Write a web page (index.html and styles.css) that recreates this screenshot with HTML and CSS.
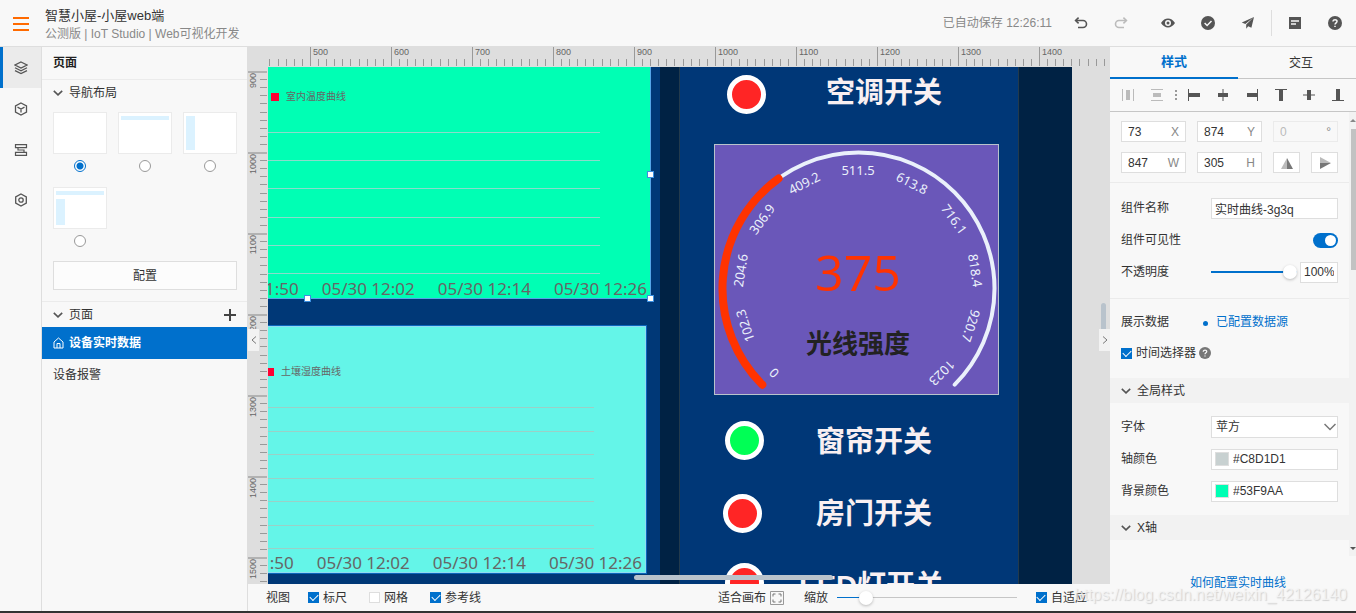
FILE: index.html
```html
<!DOCTYPE html>
<html lang="zh-CN">
<head>
<meta charset="utf-8">
<title>智慧小屋-小屋web端</title>
<link rel="stylesheet" href="styles.css">
</head>
<body>
<header class="topbar">
  <button class="icon-btn menu-btn" aria-label="菜单"><svg width="16" height="14" viewBox="0 0 16 14"><path d="M0 1h16M0 7h16M0 13h16" stroke="#ff6a00" stroke-width="2"/></svg></button>
  <div class="project">
    <h1 class="project-name">智慧小屋-小屋web端</h1>
    <p class="project-meta">公测版 | IoT Studio | Web可视化开发</p>
  </div>
  <span class="saved">已自动保存 12:26:11</span>
  <nav class="actions">
    <button class="icon-btn" aria-label="撤销"><svg width="14" height="14" viewBox="0 0 14 14" fill="none" stroke="#555" stroke-width="1.6"><path d="M2 4.5h7a3.5 3.5 0 0 1 0 7H4"/><path d="M4.6 1.6 1.6 4.5l3 2.9"/></svg></button>
    <button class="icon-btn" aria-label="重做"><svg width="14" height="14" viewBox="0 0 14 14" fill="none" stroke="#bbb" stroke-width="1.6"><path d="M12 4.5H5a3.5 3.5 0 0 0 0 7h5"/><path d="m9.400 1.6 3 2.900-3 2.900"/></svg></button>
    <button class="icon-btn gap-left" aria-label="预览"><svg width="14" height="14" viewBox="0 0 14 14"><path fill="#555" fill-rule="evenodd" d="M0 7c2-3 4.300-4.400 7-4.400S12 4 14 7c-2 3-4.300 4.400-7 4.400S2 10 0 7zm7-3a3 3 0 1 0 0 6 3 3 0 0 0 0-6z"/><circle cx="7" cy="7" r="1.500" fill="#555"/></svg></button>
    <button class="icon-btn" aria-label="检查"><svg width="14" height="14" viewBox="0 0 14 14"><circle cx="7" cy="7" r="7" fill="#555"/><path d="m3.600 7 2.500 2.500 4.400-4.600" fill="none" stroke="#f8f8f8" stroke-width="1.500"/></svg></button>
    <button class="icon-btn" aria-label="发布"><svg width="14" height="14" viewBox="0 0 14 14"><path fill="#555" d="M13 1 .8 6.500l3.500 1.600zM13 1 5.200 8.600v4.200l2-2.600 3.200 1.600z"/></svg></button>
    <span class="divider"></span>
    <button class="icon-btn" aria-label="文档"><svg width="14" height="14" viewBox="0 0 14 14"><path fill="#555" d="M1 1h12v12H1z"/><path d="M3 5h8M3 8h5" stroke="#f8f8f8" stroke-width="1.300"/></svg></button>
    <button class="icon-btn" aria-label="帮助"><svg width="14" height="14" viewBox="0 0 14 14"><circle cx="7" cy="7" r="7" fill="#555"/><path d="M5 5.600C5 3 9.200 3.200 9 5.500 8.900 6.800 7 6.900 7 8.600M7 9.800v1.300" fill="none" stroke="#f8f8f8" stroke-width="1.500"/></svg></button>
  </nav>
</header>

<div class="workspace">
  <nav class="rail">
    <button class="rail-btn active" aria-label="页面"><svg width="14" height="14" viewBox="0 0 14 14" fill="none" stroke="#555" stroke-width="1.200"><path d="M7 1 13 4 7 7 1 4z"/><path d="M1 6.800l6 3 6-3M1 9.600l6 3 6-3"/></svg></button>
    <button class="rail-btn" aria-label="组件"><svg width="14" height="14" viewBox="0 0 14 14" fill="none" stroke="#555" stroke-width="1.300"><path d="m7 1 5.500 2.800v6.400L7 13l-5.500-2.800V3.800zM3.500 5.200 7 7l3.500-1.800M7 7v3.600"/></svg></button>
    <button class="rail-btn" aria-label="数据"><svg width="14" height="14" viewBox="0 0 14 14" fill="none" stroke="#555" stroke-width="1.200"><path d="M1.500 1.600h11v3h-11zM1.500 9.400h11v3h-11zM4 4.600v2.400h6v2.400"/></svg></button>
    <button class="rail-btn settings" aria-label="设置"><svg width="14" height="14" viewBox="0 0 14 14" fill="none" stroke="#555" stroke-width="1.300"><path d="m7 1 5.300 3v6L7 13l-5.300-3V4z"/><circle cx="7" cy="7" r="2.200"/></svg></button>
  </nav>

  <aside class="pages">
    <h2 class="pages-title">页面</h2>
    <section class="nav-layout">
      <h3 class="fold"><svg class="chev" width="10" height="6" viewBox="0 0 10 6"><path d="m.8.8 4.200 4 4.200-4"/></svg>导航布局</h3>
      <div class="layouts">
        <label class="layout"><span class="thumb"></span><input type="radio" name="layout" checked aria-label="无导航"></label>
        <label class="layout"><span class="thumb"><i class="bar-top"></i></span><input type="radio" name="layout" aria-label="顶部导航"></label>
        <label class="layout"><span class="thumb"><i class="bar-side"></i></span><input type="radio" name="layout" aria-label="侧边导航"></label>
        <label class="layout"><span class="thumb"><i class="bar-top"></i><i class="bar-side"></i></span><input type="radio" name="layout" aria-label="混合导航"></label>
      </div>
      <button class="config">配置</button>
    </section>
    <section class="page-list">
      <h3 class="fold"><svg class="chev" width="10" height="6" viewBox="0 0 10 6"><path d="m.8.8 4.200 4 4.200-4"/></svg>页面
        <button class="icon-btn add" aria-label="新增页面"><svg width="12" height="12" viewBox="0 0 12 12"><path d="M0 6h12M6 0v12" stroke="#444" stroke-width="2"/></svg></button></h3>
      <a class="page-item current" href="#p1"><svg width="11" height="12" viewBox="0 0 11 12" fill="none" stroke="#fff"><path d="M1 5 5.500 1 10 5v6H1zM4 11V6.500h3V11"/></svg>设备实时数据</a>
      <a class="page-item" href="#p2">设备报警</a>
    </section>
  </aside>

  <main class="editor">
    <svg class="ruler-x" role="img" aria-label="水平标尺">
      <defs>
        <pattern id="tx" x="42" width="81" height="20" patternUnits="userSpaceOnUse">
          <path fill="#999" d="M0 0h1v19H0zM8 12h1v7H8zM16 12h1v7h-1zM24 12h1v7h-1zM32 12h1v7h-1zM40 12h1v7h-1zM49 12h1v7h-1zM57 12h1v7h-1zM65 12h1v7h-1zM73 12h1v7h-1z"/>
        </pattern>
      </defs>
      <rect width="100%" height="20" fill="url(#tx)"/>
      <text x="45" y="8">500</text><text x="126" y="8">600</text><text x="207" y="8">700</text><text x="288" y="8">800</text><text x="369" y="8">900</text><text x="450" y="8">1000</text><text x="531" y="8">1100</text><text x="612" y="8">1200</text><text x="693" y="8">1300</text><text x="774" y="8">1400</text>
    </svg>
    <svg class="ruler-y" role="img" aria-label="垂直标尺">
      <defs>
        <pattern id="ty" y="4" width="20" height="81" patternUnits="userSpaceOnUse">
          <path fill="#b2b2b2" d="M0 0h19v2H0z"/>
          <path fill="#999" d="M12 8h7v1h-7zM12 16h7v1h-7zM12 24h7v1h-7zM12 32h7v1h-7zM12 41h7v1h-7zM12 49h7v1h-7zM12 57h7v1h-7zM12 65h7v1h-7zM12 73h7v1h-7z"/>
        </pattern>
      </defs>
      <rect width="20" height="100%" fill="url(#ty)"/>
      <g text-anchor="end">
        <text transform="translate(8 6) rotate(-90)">900</text><text transform="translate(8 87) rotate(-90)">1000</text><text transform="translate(8 168) rotate(-90)">1100</text><text transform="translate(8 249) rotate(-90)">1200</text><text transform="translate(8 330) rotate(-90)">1300</text><text transform="translate(8 411) rotate(-90)">1400</text><text transform="translate(8 492) rotate(-90)">1500</text>
      </g>
    </svg>

    <div class="stage">
      <div class="artboard">
        <div class="column"></div>
        <figure class="chart temp">
          <figcaption class="legend">室内温度曲线</figcaption>
          <div class="grid"><i></i><i></i><i></i><i></i><i></i><i></i></div>
          <div class="axis"><span>05/30 11:50</span><span>05/30 12:02</span><span>05/30 12:14</span><span>05/30 12:26</span></div>
        </figure>
        <i class="knob k-right"></i><i class="knob k-bottom"></i><i class="knob k-corner"></i>
        <figure class="chart soil">
          <figcaption class="legend">土壤湿度曲线</figcaption>
          <div class="grid"><i></i><i></i><i></i><i></i><i></i><i></i><i></i></div>
          <div class="axis"><span>05/30 11:50</span><span>05/30 12:02</span><span>05/30 12:14</span><span>05/30 12:26</span></div>
        </figure>
        <span class="lamp red lamp-1"></span><span class="switch-name name-1">空调开关</span>
        <svg class="gauge" viewBox="0 0 285 251">
          <g fill="none" stroke-linecap="round">
            <path d="M48.300 240.700A136 136 0 1 1 240.700 240.700" stroke="#eaf1fb" stroke-width="4"/>
            <path d="M48.300 240.700A136 136 0 0 1 64.600 34.500" stroke="#ff3300" stroke-width="8"/>
          </g>
          <g class="gauge-ticks" transform="translate(144 145)">
            <text transform="rotate(-135)" y="-114">0</text><text transform="rotate(-108)" y="-114">102.3</text><text transform="rotate(-81)" y="-114">204.6</text><text transform="rotate(-54)" y="-114">306.9</text><text transform="rotate(-27)" y="-114">409.2</text><text y="-114">511.5</text><text transform="rotate(27)" y="-114">613.8</text><text transform="rotate(54)" y="-114">716.1</text><text transform="rotate(81)" y="-114">818.4</text><text transform="rotate(108)" y="-114">920.7</text><text transform="rotate(135)" y="-114">1023</text>
          </g>
          <text class="gauge-value" x="144" y="147">375</text>
          <text class="gauge-name" x="144" y="209">光线强度</text>
        </svg>
        <span class="lamp green lamp-2"></span><span class="switch-name name-2">窗帘开关</span>
        <span class="lamp red lamp-3"></span><span class="switch-name name-3">房门开关</span>
        <span class="lamp red lamp-4"></span><span class="switch-name name-4">LED灯开关</span>
      </div>
      <i class="scroll-x"></i><i class="scroll-y"></i>
    </div>
    <button class="collapse left" aria-label="收起左栏"><svg width="6" height="8" viewBox="0 0 6 8"><path d="M5 .5 1 4l4 3.500"/></svg></button>
    <button class="collapse right" aria-label="收起右栏"><svg width="6" height="8" viewBox="0 0 6 8"><path d="m1 .5 4 3.500-4 3.500"/></svg></button>

    <div class="statusbar">
      <span class="view-label">视图</span>
      <label class="check"><input type="checkbox" checked>标尺</label>
      <label class="check"><input type="checkbox">网格</label>
      <label class="check"><input type="checkbox" checked>参考线</label>
      <button class="fit">适合画布<svg width="14" height="14" viewBox="0 0 14 14" fill="none" stroke="#999"><path d="M.5.5h13v13H.5z"/><path d="M3 5.500V3h2.500M8.500 3H11v2.500M11 8.500V11H8.500M5.500 11H3V8.500" stroke="#777"/></svg></button>
      <div class="zoom"><label for="zoom">缩放</label><input id="zoom" class="range zoom-range" type="range" value="13"></div>
      <label class="check fit-auto"><input type="checkbox" checked>自适应</label>
    </div>
  </main>

  <aside class="props">
    <div class="tabs"><button class="tab on">样式</button><button class="tab">交互</button></div>
    <div class="aligns">
      <button class="icon-btn" aria-label="水平分布"><svg width="14" height="14" viewBox="0 0 14 14" fill="#bbb"><path d="M1 1h1v12H1zM12 1h1v12h-1zM5 2h4v10H5z"/></svg></button>
      <button class="icon-btn" aria-label="垂直分布"><svg width="14" height="14" viewBox="0 0 14 14" fill="#bbb"><path d="M1 1h12v1H1zM1 12h12v1H1zM3 5h8v4H3z"/></svg></button>
      <svg class="dots" width="2" height="10" viewBox="0 0 2 10" fill="#999"><path d="M0 0h2v2H0zM0 4h2v2H0zM0 8h2v2H0z"/></svg>
      <button class="icon-btn" aria-label="左对齐"><svg width="14" height="14" viewBox="0 0 14 14" fill="#555"><path d="M1 1h1v12H1zM2 5h11v4H2z"/></svg></button>
      <button class="icon-btn" aria-label="水平居中"><svg width="14" height="14" viewBox="0 0 14 14" fill="#555"><path d="M6.500 1h1v12h-1zM2 5h10v4H2z"/></svg></button>
      <button class="icon-btn" aria-label="右对齐"><svg width="14" height="14" viewBox="0 0 14 14" fill="#555"><path d="M12 1h1v12h-1zM2 5h10v4H2z"/></svg></button>
      <button class="icon-btn" aria-label="顶对齐"><svg width="14" height="14" viewBox="0 0 14 14" fill="#555"><path d="M1 1h12v1H1zM5 2h4v11H5z"/></svg></button>
      <button class="icon-btn" aria-label="垂直居中"><svg width="14" height="14" viewBox="0 0 14 14" fill="#555"><path d="M1 6.500h12v1H1zM5 2h4v10H5z"/></svg></button>
      <button class="icon-btn" aria-label="底对齐"><svg width="14" height="14" viewBox="0 0 14 14" fill="#555"><path d="M1 12h12v1H1zM5 1h4v11H5z"/></svg></button>
    </div>

    <div class="props-scroll">
      <div class="props-body">
        <section class="geometry">
          <label class="field"><input type="text" value="73"><span>X</span></label>
          <label class="field"><input type="text" value="874"><span>Y</span></label>
          <label class="field off"><input type="text" value="0" disabled><span>°</span></label>
          <label class="field"><input type="text" value="847"><span>W</span></label>
          <label class="field"><input type="text" value="305"><span>H</span></label>
          <div class="flips">
            <button class="flip" aria-label="水平翻转"><svg width="12" height="12" viewBox="0 0 12 12"><path d="M6 1v11H0z" fill="#bbb"/><path d="M6 1v11h6z" fill="#777"/></svg></button>
            <button class="flip" aria-label="垂直翻转"><svg width="12" height="12" viewBox="0 0 12 12"><path d="M1 6h11L1 0z" fill="#bbb"/><path d="M1 6h11L1 12z" fill="#777"/></svg></button>
          </div>
        </section>
        <section class="basic">
          <label class="row"><span class="row-label">组件名称</span><input class="text-box" type="text" value="实时曲线-3g3q"></label>
          <label class="row"><span class="row-label">组件可见性</span><input class="toggle" type="checkbox" checked></label>
          <div class="row"><label class="row-label" for="opacity">不透明度</label><div class="opacity"><input id="opacity" class="range opacity-range" type="range" value="100"><input class="text-box percent" type="text" value="100%" aria-label="不透明度数值"></div></div>
        </section>
        <section class="data">
          <div class="row"><span class="row-label">展示数据</span><a class="source" href="#data">已配置数据源</a></div>
          <div class="row picker"><label class="check"><input type="checkbox" checked>时间选择器</label><svg width="12" height="12" viewBox="0 0 14 14"><circle cx="7" cy="7" r="7" fill="#777"/><path d="M5 5.600C5 3 9.200 3.200 9 5.500 8.900 6.800 7 6.900 7 8.600M7 9.800v1.300" fill="none" stroke="#f8f8f8" stroke-width="1.500"/></svg></div>
        </section>
        <h3 class="group"><svg class="chev" width="10" height="6" viewBox="0 0 10 6"><path d="m.8.8 4.200 4 4.200-4"/></svg>全局样式</h3>
        <section class="global">
          <label class="row"><span class="row-label">字体</span><span class="select-wrap"><select class="text-box"><option>苹方</option></select><svg width="12" height="8" viewBox="0 0 12 8"><path d="m.5 1 5.500 5.500L11.500 1"/></svg></span></label>
          <label class="row"><span class="row-label">轴颜色</span><span class="text-box color"><i class="swatch axis-color"></i><input type="text" value="#C8D1D1"></span></label>
          <label class="row"><span class="row-label">背景颜色</span><span class="text-box color"><i class="swatch bg-color"></i><input type="text" value="#53F9AA"></span></label>
        </section>
        <h3 class="group"><svg class="chev" width="10" height="6" viewBox="0 0 10 6"><path d="m.8.8 4.200 4 4.200-4"/></svg>X轴</h3>
      </div>
      <div class="lane"><i class="arrow up"></i><i class="lane-thumb"></i><i class="arrow down"></i></div>
    </div>
    <div class="help"><a href="#help">如何配置实时曲线</a></div>
  </aside>
</div>
<div class="watermark">https://blog.csdn.net/weixin_42126140</div>
</body>
</html>
```

FILE: styles.css
```css
* { box-sizing: border-box; }

body {
  margin: 0;
  height: 100vh;
  display: flex;
  flex-direction: column;
  overflow: hidden;
  border-bottom: 2px solid #333;
  background: #f8f8f8;
  color: #333;
  font: 12px/16px "Liberation Sans", "Noto Sans CJK SC", sans-serif;
}

h1, h2, h3, p, figure { margin: 0; font-size: 12px; font-weight: 400; }
button, input, select { font: inherit; color: inherit; margin: 0; }
button { padding: 0; border: 0; background: none; }
a { color: #0070cc; text-decoration: none; }
svg { display: block; flex: none; }

.icon-btn { display: grid; place-items: center; width: 14px; height: 14px; }
.chev { fill: none; stroke: #555; stroke-width: 1.6; }

/* top bar */
.topbar {
  flex: none;
  display: flex;
  align-items: center;
  height: 47px;
  padding: 0 14px 0 13px;
  border-bottom: 1px solid #dedede;
}
.menu-btn { width: 16px; margin-top: 2px; }
.project { margin-left: 16px; padding-top: 4px; }
.project-name { font-size: 13px; line-height: 18px; }
.project-meta { line-height: 18px; color: #888; }
.saved { margin-left: auto; color: #888; }
.actions { display: flex; align-items: center; gap: 26px; margin-left: 22px; }
.gap-left { margin-left: 7px; }
.divider { width: 1px; height: 26px; margin: 0 -10px; background: #dedede; }

.workspace { flex: 1; min-height: 0; display: flex; }

/* icon rail */
.rail { flex: none; width: 42px; border-right: 1px solid #dedede; }
.rail-btn { display: grid; place-items: center; width: 41px; height: 41px; }
.rail-btn.active { border-left: 3px solid #0070cc; background: #ebebeb; padding-right: 3px; }
.rail-btn.settings { margin-top: 9px; }

/* pages panel */
.pages { flex: none; width: 206px; border-right: 1px solid #dedede; }
.pages-title { height: 33px; padding-left: 11px; line-height: 32px; font-weight: 700; color: #222; border-bottom: 1px solid #ebebeb; }
.nav-layout { padding: 0 10px 11px 11px; border-bottom: 1px solid #ebebeb; }
.fold { display: flex; align-items: center; gap: 6px; height: 25px; }
.nav-layout .fold { height: 26px; }
.layouts { display: grid; grid-template-columns: repeat(3, 54px); justify-content: space-between; row-gap: 15px; padding-top: 6px; }
.layout { display: flex; flex-direction: column; align-items: center; gap: 6px; }
.thumb { display: grid; grid-template: 4px 1fr / 9px 1fr; gap: 4px; width: 54px; height: 42px; padding: 3px 2px; border: 1px solid #ebebeb; background: #fff; }
.bar-top { grid-column: 1 / 3; background: #dbf2ff; }
.bar-side { grid-row: 1 / 3; background: #dbf2ff; }
.bar-top + .bar-side { grid-row: 2; }
.layouts input { appearance: none; width: 12px; height: 12px; border: 1px solid #999; border-radius: 50%; background: #fff; }
.layouts input:checked { border-color: #0070cc; background: radial-gradient(#0070cc 3px, #fff 4px); }
.config { display: block; width: 100%; height: 29px; margin-top: 14px; border: 1px solid #dedede; background: #fcfcfc; }
.page-list .fold { padding: 0 10px 0 11px; }
.add { margin-left: auto; }
.page-item { display: flex; align-items: center; gap: 5px; height: 32px; padding-left: 11px; color: #333; }
.page-item.current { background: #0070cc; color: #fff; font-weight: 700; }

/* canvas */
.editor { position: relative; flex: 1; min-width: 0; display: grid; grid-template: 20px 1fr 27px / 20px 1fr; background: #dedede; }
.ruler-x { grid-area: 1 / 2; width: 100%; height: 20px; }
.ruler-y { grid-area: 2 / 1; width: 20px; height: 100%; }
.ruler-x text, .ruler-y text { font-size: 9px; fill: #666; }
.stage { position: relative; grid-area: 2 / 2; overflow: hidden; }
.artboard { position: absolute; inset: 0 auto 0 0; width: 804px; overflow: hidden; background: linear-gradient(90deg, #003877 392px, #002244 392px); }
.column { position: absolute; inset: 0 auto 0 411px; width: 340px; background: #003777; border: solid #223a4c; border-width: 0 1px; }

.chart { position: absolute; left: -300px; border: 1px solid #8fdcf2; }
.temp { top: -20px; width: 683px; height: 252px; background: #00ffb4; border-color: #54a5e8; }
.soil { top: 259px; width: 678px; height: 247px; background: #64f5e8; outline: 1px solid #0a66bb; }
.legend { position: absolute; display: flex; align-items: center; gap: 7px; font-size: 10px; line-height: 12px; color: #666; }
.legend::before { content: ""; width: 8px; height: 8px; background: #ff0033; }
.temp .legend { left: 302px; top: 43px; }
.soil .legend { left: 297px; top: 39px; }
.grid { position: absolute; left: 0; display: flex; flex-direction: column; justify-content: space-between; }
.grid i { height: 1px; background: #8bdccb; }
.temp .grid { top: 84px; width: 631px; height: 142px; }
.soil .grid { top: 80px; width: 625px; height: 142px; }
.soil .grid i { background: #9bd0c6; }
.axis { position: absolute; right: 0; bottom: -3px; display: flex; gap: 23px; padding-right: 3px; font: 17px/24px "Noto Sans", sans-serif; color: #666; white-space: nowrap; }
.knob { position: absolute; width: 7px; height: 7px; border: 1px solid #3c8fe0; background: #fff; }
.k-right { left: 379px; top: 104px; }
.k-bottom { left: 36px; top: 228px; }
.k-corner { left: 379px; top: 228px; }

.lamp { position: absolute; width: 39px; height: 39px; border: 5px solid #fff; border-radius: 50%; }
.red { background: #ff2525; }
.green { background: #00ff55; }
.lamp-1 { left: 459px; top: 8px; }
.lamp-2 { left: 457px; top: 354px; }
.lamp-3 { left: 455px; top: 427px; }
.lamp-4 { left: 457px; top: 496px; }
.switch-name { position: absolute; font-size: 29px; line-height: 36px; font-weight: 700; color: #f9f0f2; white-space: nowrap; }
.name-1 { left: 558px; top: 8px; }
.name-2 { left: 548px; top: 357px; }
.name-3 { left: 548px; top: 429px; }
.name-4 { left: 531px; top: 501px; }

.gauge { position: absolute; left: 446px; top: 77px; width: 285px; height: 251px; background: #6a57b9; outline: 1px solid #b9c3cc; outline-offset: -1px; }
.gauge text { text-anchor: middle; }
.gauge-ticks { font: 13px "Noto Sans", sans-serif; fill: #eaf1fb; }
.gauge-value { font: 50px "Open Sans", "Noto Sans", sans-serif; fill: #ff3300; }
.gauge-name { font-size: 26px; font-weight: 700; fill: #222; }

.scroll-x { position: absolute; left: 366px; bottom: 4px; width: 199px; height: 5px; border-radius: 3px; background: #b9c3cc; }
.scroll-y { position: absolute; right: 4px; top: 236px; width: 5px; height: 40px; border-radius: 3px; background: #b9c3cc; }
.collapse { position: absolute; top: 282px; display: grid; place-items: center; width: 11px; height: 22px; background: #f2f2f2; }
.collapse svg { fill: none; stroke: #777; }
.collapse.left { left: 0; }
.collapse.right { right: 0; }

/* status bar */
.statusbar { grid-area: 3 / 1 / 4 / 3; display: flex; align-items: center; padding: 0 23px 0 18px; background: #f8f8f8; white-space: nowrap; }
.check { display: flex; align-items: center; gap: 4px; }
.check input { appearance: none; display: grid; place-items: center; width: 11px; height: 11px; border: 1px solid #dedede; background: #fff; }
.check input:checked { border-color: #0070cc; background: #0070cc; }
.check input:checked::after { content: ""; width: 7px; height: 4px; margin-top: -2px; border: solid #fff; border-width: 0 0 1px 1px; rotate: -45deg; }
.view-label { margin-right: 18px; }
.statusbar .check { margin-right: 22px; }
.statusbar .fit-auto { margin-right: 0; }
.fit { display: flex; align-items: center; gap: 4px; margin-left: auto; }
.zoom { display: flex; align-items: center; gap: 9px; margin: 0 19px 0 20px; }
.range { appearance: none; height: 14px; background: none; }
.range::-webkit-slider-runnable-track { height: 14px; }
.range::-webkit-slider-thumb { appearance: none; width: 14px; height: 14px; border-radius: 50%; background: #fff; box-shadow: 0 1px 3px rgba(0, 0, 0, .25); }
.zoom-range { width: 180px; background: linear-gradient(90deg, #0070cc 15%, #c6c6c6 15%) center / 100% 1px no-repeat; }
.opacity-range { flex: 1; min-width: 0; background: linear-gradient(#0070cc, #0070cc) center / 100% 2px no-repeat; }

/* properties */
.props { flex: none; width: 246px; display: flex; flex-direction: column; }
.tabs { flex: none; display: flex; height: 32px; }
.tab { flex: 1; padding-left: 8px; border-bottom: 1px solid #c6c6c6; }
.tab.on { flex: 0 0 52%; padding-left: 0; border-bottom: 2px solid #0070cc; color: #0070cc; font-size: 13px; font-weight: 700; }
.aligns { flex: none; display: flex; align-items: center; justify-content: space-between; height: 33px; padding: 0 11px; border-bottom: 1px solid #c6c6c6; }
.dots { margin: 0 -4px; }
.props-scroll { flex: 1; min-height: 0; display: flex; overflow: hidden; }
.props-body { flex: 1; min-width: 0; }
.lane { flex: none; display: flex; flex-direction: column; align-items: center; width: 7px; background: #f2f2f2; }
.lane-thumb { width: 5px; height: 141px; margin-left: 2px; background: #c2c2c2; }
.arrow { border: 3px solid transparent; }
.up { margin: 4px 0 7px; border-bottom-color: #888; }
.down { margin: auto 0 3px; border-top-color: #555; }

.geometry { display: grid; grid-template-columns: repeat(3, 65px); gap: 10px 11px; padding: 9px 11px; border-bottom: 1px solid #ebebeb; }
.field { display: flex; align-items: center; height: 21px; padding: 0 6px; border: 1px solid #dedede; background: #fff; }
.field input { flex: 1; width: 0; padding: 0; border: 0; background: none; }
.field span { color: #888; }
.off { background: #f8f8f8; border-color: #ebebeb; color: #bbb; }
.flips { display: flex; justify-content: space-between; }
.flip { display: grid; place-items: center; width: 27px; height: 21px; border: 1px solid #dedede; background: #fff; }

.row { display: grid; grid-template-columns: 90px minmax(0, 1fr); align-items: center; min-height: 22px; }
.text-box { width: 100%; height: 21px; padding: 0 4px; border: 1px solid #dedede; border-radius: 0; background: #fff; }
.basic { display: grid; grid-template-columns: minmax(0, 1fr); gap: 10px; padding: 14px 11px 15px; border-bottom: 1px solid #ebebeb; }
.basic .text-box { padding: 0 3px; }
.toggle { appearance: none; display: flex; align-items: center; justify-self: end; width: 25px; height: 15px; border-radius: 8px; background: #0070cc; }
.toggle::after { content: ""; width: 11px; height: 11px; margin-left: 12px; border-radius: 50%; background: #fff; }
.opacity { display: flex; align-items: center; gap: 3px; }
.opacity .percent { flex: none; width: 38px; }
.data { display: grid; gap: 9px; padding: 12px 11px 14px; }
.source { position: relative; padding-left: 5px; }
.source::before { content: ""; position: absolute; left: -8px; top: 7px; width: 5px; height: 5px; border-radius: 50%; background: #0070cc; }
.picker { display: flex; gap: 3px; }
.group { display: flex; align-items: center; gap: 6px; height: 25px; padding: 0 11px; background: #f2f2f2; }
.global { display: grid; gap: 10px; padding: 13px 11px; }
.select-wrap { position: relative; }
.select-wrap select { display: block; appearance: none; height: 22px; }
.select-wrap svg { position: absolute; right: 2px; top: 7px; fill: none; stroke: #777; stroke-width: 1.5; pointer-events: none; }
.color { display: flex; align-items: center; gap: 4px; padding: 0 3px; }
.color input { flex: 1; width: 0; padding: 0; border: 0; background: none; }
.swatch { width: 14px; height: 14px; border: 1px solid #dedede; }
.axis-color { background: #c8d1d1; }
.bg-color { background: #00ffb4; }
.help { flex: none; height: 55px; padding: 19px 0 0 10px; text-align: center; }

.watermark { position: absolute; right: 9px; bottom: 9px; font-size: 16px; line-height: 18px; color: rgba(245, 245, 245, .8); text-shadow: 1px 1px 1px rgba(150, 150, 150, .4); pointer-events: none; }
```
